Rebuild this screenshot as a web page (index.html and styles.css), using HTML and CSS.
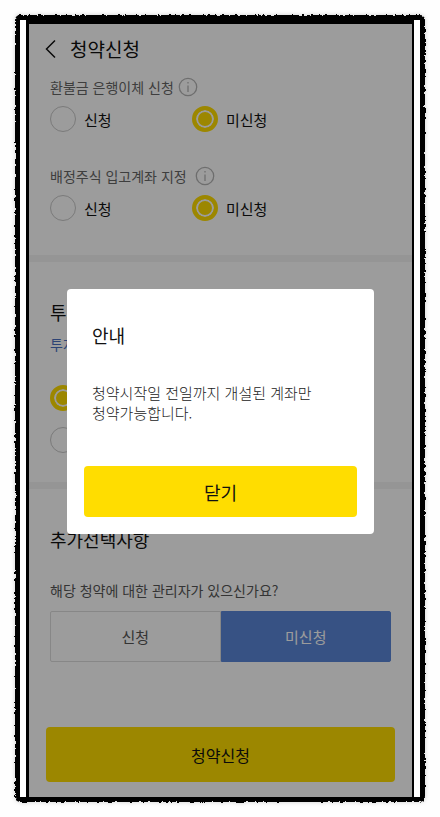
FILE: index.html
```html
<!DOCTYPE html>
<html lang="ko">
<head>
    <meta charset="UTF-8">
    <meta name="viewport" content="width=device-width, initial-scale=1.0">
    <title>청약신청</title>
    <link rel="stylesheet" href="styles.css">
</head>
<body>
    <svg class="defs" width="0" height="0" aria-hidden="true">
        <filter id="rough" x="-5%" y="-5%" width="110%" height="110%" color-interpolation-filters="sRGB">
            <feTurbulence type="fractalNoise" baseFrequency="0.3" numOctaves="3" seed="4" result="noise"/>
            <feDisplacementMap in="SourceGraphic" in2="noise" scale="4" xChannelSelector="R" yChannelSelector="G"/>
        </filter>
    </svg>
    <div class="frame">
        <div class="bezel">
            <div class="screen">
                <header>
                    <button type="button" class="back" aria-label="뒤로">
                        <svg width="12" height="20" viewBox="0 0 12 20"><path d="M10 1.5 L1.5 10 L10 18.5"/></svg>
                    </button>
                    <h1>청약신청</h1>
                </header>
                <main>
                    <section class="accounts">
                        <fieldset>
                            <legend>환불금 은행이체 신청
                                <svg class="info" viewBox="0 0 20 20"><circle cx="10" cy="10" r="8.7"/><path d="M10 8.5V15M10 5V6.5"/></svg>
                            </legend>
                            <div class="options">
                                <label><input type="radio" name="refund"> 신청</label>
                                <label><input type="radio" name="refund" checked> 미신청</label>
                            </div>
                        </fieldset>
                        <fieldset>
                            <legend class="wide">배정주식 입고계좌 지정
                                <svg class="info" viewBox="0 0 20 20"><circle cx="10" cy="10" r="8.7"/><path d="M10 8.5V15M10 5V6.5"/></svg>
                            </legend>
                            <div class="options">
                                <label><input type="radio" name="deposit"> 신청</label>
                                <label><input type="radio" name="deposit" checked> 미신청</label>
                            </div>
                        </fieldset>
                    </section>
                    <section class="invest">
                        <h2>투자</h2>
                        <a href="#">투자</a>
                        <div class="stack">
                            <label><input type="radio" name="invest" aria-label="신청" checked></label>
                            <label><input type="radio" name="invest" aria-label="미신청"></label>
                        </div>
                    </section>
                    <section class="extra">
                        <h2>추가선택사항</h2>
                        <p>해당 청약에 대한 관리자가 있으신가요?</p>
                        <div class="segment">
                            <button type="button">신청</button>
                            <button type="button" class="selected">미신청</button>
                        </div>
                    </section>
                </main>
                <button type="submit" class="submit">청약신청</button>

                <div class="overlay">
                    <div class="modal" role="dialog" aria-modal="true" aria-labelledby="modalTitle">
                        <h2 id="modalTitle">안내</h2>
                        <p>청약시작일 전일까지 개설된 계좌만 청약가능합니다.</p>
                        <button type="button" class="close">닫기</button>
                    </div>
                </div>
            </div>
        </div>
    </div>
</body>
</html>
```
FILE: styles.css
```css
* {
    box-sizing: border-box;
}

body {
    margin: 0;
    padding: 15px;
    background: #fefefe;
    color: #111;
    font-family: "Noto Sans CJK KR", sans-serif;
    font-size: 15px;
    word-break: keep-all;
}

h1, h2, p, fieldset {
    margin: 0;
    padding: 0;
    border: 0;
    font-weight: 400;
}

button {
    padding: 0;
    border: 0;
    color: inherit;
    font-family: inherit;
    cursor: pointer;
}

.defs {
    position: absolute;
}

/* hand-drawn looking black edge */
.frame {
    position: relative;
    z-index: 0;
    display: flex;
    min-height: calc(100vh - 30px);
    padding: 5px;
}

.frame::before {
    content: "";
    position: absolute;
    inset: 0;
    z-index: -1;
    border-radius: 5px;
    background: #000;
    filter: url(#rough) drop-shadow(0 0 2px rgba(0, 0, 0, 0.2));
}

.bezel {
    display: flex;
    flex: 1;
    padding: 0 6px;
    background: #fff;
}

.screen {
    position: relative;
    display: flex;
    flex: 1;
    flex-direction: column;
    border: solid #000;
    border-width: 4px 2px 0 3px;
    background: #fff;
}

header {
    display: flex;
    align-items: center;
    gap: 13px;
    height: 49px;
    padding: 0 16px;
}

h1 {
    font-size: 19px;
}

.back {
    display: flex;
    background: none;
}

.back path {
    fill: none;
    stroke: #111;
    stroke-width: 1.5;
}

section {
    padding: 36px 21px 0;
}

h2 {
    font-size: 18px;
    line-height: 28px;
}

.accounts {
    display: grid;
    gap: 25px;
    padding-top: 0;
    padding-bottom: 29px;
    border-bottom: 7px solid #f4f4f4;
}

legend {
    display: flex;
    align-items: center;
    gap: 4px;
    height: 28px;
    padding: 0;
    color: #666;
    font-size: 14px;
}

legend.wide {
    gap: 8px;
}

.info {
    width: 20px;
    height: 20px;
    fill: none;
    stroke: #b4b4b4;
    stroke-width: 1.3;
}

.options {
    display: grid;
    grid-template-columns: 142px 1fr;
}

label {
    display: flex;
    align-items: center;
    gap: 8px;
    height: 36px;
}

input[type="radio"] {
    appearance: none;
    width: 26px;
    height: 26px;
    margin: 0;
    border: 1px solid #c8c8c8;
    border-radius: 50%;
}

input[type="radio"]:checked {
    border: 4px solid #ffdd00;
    background: #ffdd00;
    box-shadow: inset 0 0 0 2px #fff;
}

.invest {
    padding-bottom: 24px;
    border-bottom: 7px solid #f4f4f4;
}

.invest a {
    display: block;
    margin-top: 4px;
    color: #4a6fc0;
    font-size: 14px;
    line-height: 28px;
    text-decoration: none;
}

.stack {
    display: grid;
    gap: 6px;
    margin-top: 22px;
}

.extra p {
    margin-top: 23px;
    color: #555;
    font-size: 14px;
    line-height: 28px;
}

.segment {
    display: grid;
    grid-template-columns: 1fr 1fr;
    height: 51px;
    margin-top: 7px;
}

.segment button {
    border: 1px solid #ddd;
    border-radius: 2px 0 0 2px;
    background: #fff;
    color: #555;
    font-size: 15px;
}

.segment .selected {
    border-color: #5b87d8;
    border-radius: 0 2px 2px 0;
    background: #5b87d8;
    color: #fff;
}

.submit {
    height: 55px;
    margin: auto 17px 15px;
    border-radius: 4px;
    background: #ffdd00;
    font-size: 16px;
}

.overlay {
    position: absolute;
    inset: 0;
    display: flex;
    align-items: center;
    padding: 2px 38px 0;
    background: rgba(0, 0, 0, 0.39);
}

.modal {
    flex: 1;
    padding: 32px 17px 17px;
    border-radius: 4px;
    background: #fff;
}

.modal h2 {
    padding: 0 8px;
}

.modal p {
    margin-top: 34px;
    padding: 0 8px;
    color: #222;
    font-weight: 300;
    line-height: 20px;
}

.close {
    width: 100%;
    height: 51px;
    margin-top: 43px;
    border-radius: 4px;
    background: #ffdd00;
    font-size: 18px;
}
```
